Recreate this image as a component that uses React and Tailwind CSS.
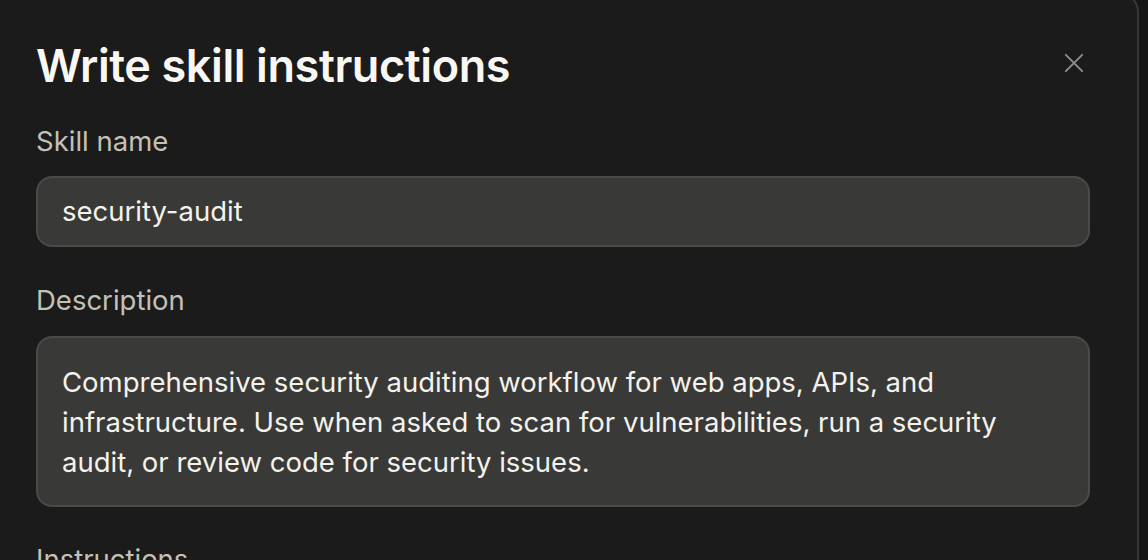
import React from 'react';

function CloseIcon() {
  return (
    <svg width="28" height="28" viewBox="0 0 24 24" fill="none" stroke="currentColor" strokeWidth="1.7" strokeLinecap="round">
      <path d="M5 5l14 14M19 5L5 19" />
    </svg>
  );
}

export default function App() {
  return (
    <div className="w-[1148px] h-[560px] overflow-hidden bg-[#161616]" style={{ fontFamily: 'Inter, "Noto Sans", sans-serif' }}>
      <div className="w-[1139px] h-[600px] -mt-[8px] bg-[#1b1b1b] border-r-2 border-t-2 border-[#363636] rounded-tr-[20px] pl-[36px] pr-[47px] pt-[43px]">
        <div className="flex items-start justify-between">
          <h1 className="text-[45px] leading-[58px] font-semibold text-[#f8f7f3] tracking-[-0.4px]">Write skill instructions</h1>
          <button className="text-[#8d8c88] mt-[12px] mr-[2px]"><CloseIcon /></button>
        </div>

        <div className="mt-[28px]">
          <label className="block text-[27.5px] leading-[36px] text-[#c3c1b8]">Skill name</label>
          <div className="mt-[17px] h-[71px] rounded-[16px] bg-[#393937] border-2 border-[#4a4a47] px-[24px] flex items-center text-[27.5px] text-[#f4f2ec]">
            security-audit
          </div>
        </div>

        <div className="mt-[35px]">
          <label className="block text-[27.5px] leading-[36px] text-[#c3c1b8]">Description</label>
          <div className="mt-[18px] h-[171px] rounded-[16px] bg-[#393937] border-2 border-[#4a4a47] px-[24px] pt-[24px] text-[27.5px] leading-[40px] text-[#f4f2ec]">
            Comprehensive security auditing workflow for web apps, APIs, and infrastructure. Use when asked to scan for vulnerabilities, run a security audit, or review code for security issues.
          </div>
        </div>

        <div className="mt-[34px]">
          <label className="block text-[27.5px] leading-[36px] text-[#c3c1b8]">Instructions</label>
        </div>
      </div>
    </div>
  );
}
